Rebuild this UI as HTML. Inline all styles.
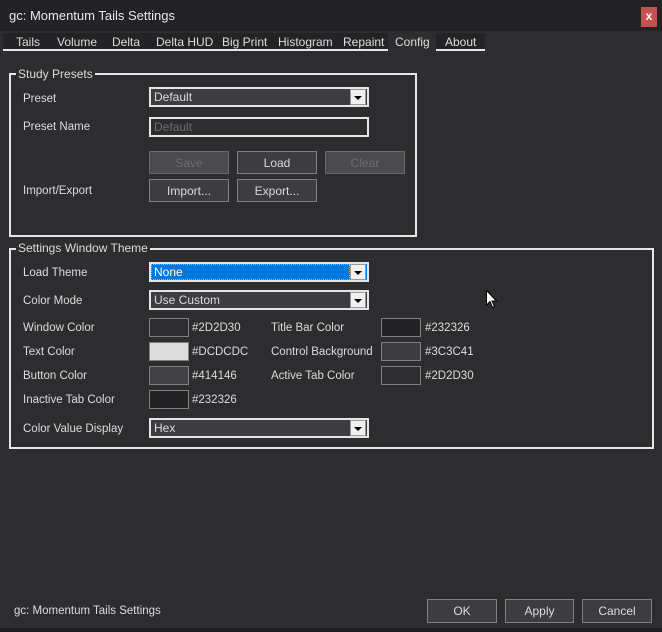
<!DOCTYPE html>
<html><head><style>
*{margin:0;padding:0;box-sizing:border-box}
body{width:662px;height:632px;background:#2D2D30;font-family:"Liberation Sans",sans-serif;font-size:11.5px;color:#DCDCDC;position:relative;overflow:hidden}
.a{position:absolute;white-space:nowrap}
.combo{position:absolute;border:2px solid #e6e6e6;background:#3C3C41;height:20px;padding-left:3px;line-height:17px;font-size:12px}
.dd{position:absolute;right:1px;top:0px;width:16px;height:16px;background:#f0f0f0;border:1px solid #999}
.dd:after{content:"";position:absolute;left:3px;top:6px;border-left:4px solid transparent;border-right:4px solid transparent;border-top:4px solid #000}
.btn{position:absolute;border:1px solid #808080;background:#3C3C41;text-align:center;line-height:22px;font-size:12px}
.dis{background:#4a4a4f;color:#6e6e70;border-color:#6a6a6a}
.grp{position:absolute;border:2px solid #e6e6e6}
.leg{position:absolute;background:#2D2D30;padding:0 2px;font-size:12px;line-height:12px}
.sw{position:absolute;width:40px;height:19px;border:1px solid #808080}
.tab{position:absolute;top:35px;font-size:12px}
</style></head><body>
<div class="a" style="left:0;top:0;width:662px;height:31px;background:#232326"></div>
<div class="a" style="left:9px;top:8px;font-size:13px;color:#e8e8e8">gc: Momentum Tails Settings</div>
<div class="a" style="left:641px;top:7px;width:16px;height:20px;background:#c75050;color:#fff;text-align:center;line-height:19px;font-size:12px;font-weight:bold">x</div>
<div class="a" style="left:3px;top:33px;width:385px;height:18px;background:#232326;border-bottom:2px solid #e6e6e6"></div>
<div class="a" style="left:388px;top:33px;width:48px;height:18px;background:#2D2D30"></div>
<div class="a" style="left:436px;top:33px;width:49px;height:18px;background:#232326;border-bottom:2px solid #e6e6e6"></div>
<div class="tab" style="left:16px">Tails</div>
<div class="tab" style="left:57px">Volume</div>
<div class="tab" style="left:112px">Delta</div>
<div class="tab" style="left:156px">Delta HUD</div>
<div class="tab" style="left:222px">Big Print</div>
<div class="tab" style="left:278px">Histogram</div>
<div class="tab" style="left:343px">Repaint</div>
<div class="tab" style="left:395px">Config</div>
<div class="tab" style="left:445px">About</div>

<div class="grp" style="left:9px;top:73px;width:408px;height:164px"></div>
<div class="leg" style="left:16px;top:68px">Study Presets</div>
<div class="a" style="left:23px;top:93px">Preset</div>
<div class="combo" style="left:149px;top:87px;width:220px">Default<div class="dd"></div></div>
<div class="a" style="left:23px;top:121px">Preset Name</div>
<div class="combo" style="left:149px;top:117px;width:220px;background:#2D2D30;color:#6e6e70">Default</div>
<div class="btn dis" style="left:149px;top:151px;width:80px;height:23px">Save</div>
<div class="btn" style="left:237px;top:151px;width:80px;height:23px">Load</div>
<div class="btn dis" style="left:325px;top:151px;width:80px;height:23px">Clear</div>
<div class="a" style="left:23px;top:185px">Import/Export</div>
<div class="btn" style="left:149px;top:179px;width:80px;height:23px">Import...</div>
<div class="btn" style="left:237px;top:179px;width:80px;height:23px">Export...</div>

<div class="grp" style="left:9px;top:248px;width:645px;height:201px"></div>
<div class="leg" style="left:16px;top:242px">Settings Window Theme</div>
<div class="a" style="left:23px;top:267px">Load Theme</div>
<div class="combo" style="left:149px;top:262px;width:220px;background:#0078D7;color:#fff"><span style="position:absolute;left:0;top:0;right:17px;bottom:0;border:1px dotted #e8a060"></span>None<div class="dd"></div></div>
<div class="a" style="left:23px;top:295px">Color Mode</div>
<div class="combo" style="left:149px;top:290px;width:220px">Use Custom<div class="dd"></div></div>

<div class="a" style="left:23px;top:322px">Window Color</div>
<div class="sw" style="left:149px;top:318px;background:#2D2D30"></div><div class="a" style="left:192px;top:322px">#2D2D30</div>
<div class="a" style="left:23px;top:346px">Text Color</div>
<div class="sw" style="left:149px;top:342px;background:#DCDCDC"></div><div class="a" style="left:192px;top:346px">#DCDCDC</div>
<div class="a" style="left:23px;top:370px">Button Color</div>
<div class="sw" style="left:149px;top:366px;background:#414146"></div><div class="a" style="left:192px;top:370px">#414146</div>
<div class="a" style="left:23px;top:394px">Inactive Tab Color</div>
<div class="sw" style="left:149px;top:390px;background:#232326"></div><div class="a" style="left:192px;top:394px">#232326</div>

<div class="a" style="left:271px;top:322px">Title Bar Color</div>
<div class="sw" style="left:381px;top:318px;background:#232326"></div><div class="a" style="left:425px;top:322px">#232326</div>
<div class="a" style="left:271px;top:346px">Control Background</div>
<div class="sw" style="left:381px;top:342px;background:#3C3C41"></div><div class="a" style="left:425px;top:346px">#3C3C41</div>
<div class="a" style="left:271px;top:370px">Active Tab Color</div>
<div class="sw" style="left:381px;top:366px;background:#2D2D30"></div><div class="a" style="left:425px;top:370px">#2D2D30</div>

<div class="a" style="left:23px;top:423px">Color Value Display</div>
<div class="combo" style="left:149px;top:418px;width:220px">Hex<div class="dd"></div></div>

<svg class="a" style="left:486px;top:290px" width="12" height="19" viewBox="0 0 12 19"><path d="M0.5 0.5 L0.5 15 L4 11.5 L6.5 17.5 L8.5 16.5 L6 11 L10.5 11 Z" fill="#fff" stroke="#000" stroke-width="1"/></svg>

<div class="a" style="left:14px;top:605px">gc: Momentum Tails Settings</div>
<div class="btn" style="left:427px;top:599px;width:70px;height:24px">OK</div>
<div class="btn" style="left:505px;top:599px;width:69px;height:24px">Apply</div>
<div class="btn" style="left:582px;top:599px;width:70px;height:24px">Cancel</div>
<div class="a" style="left:0;top:628px;width:662px;height:4px;background:#1e1e20"></div>
</body></html>
